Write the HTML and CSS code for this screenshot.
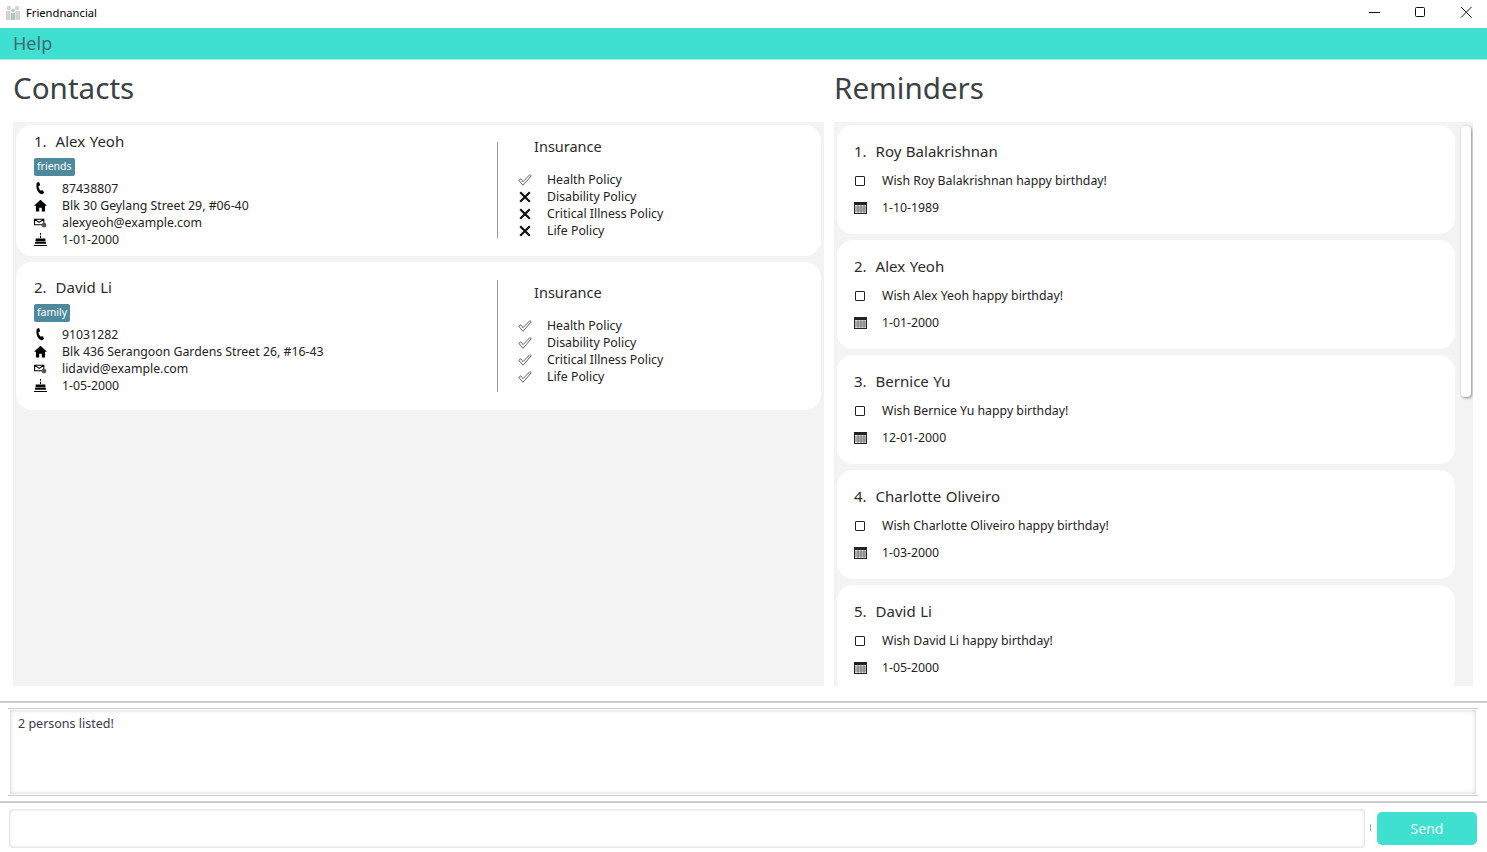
FILE: index.html
```html
<!DOCTYPE html>
<html>
<head>
  <meta charset="utf-8" />
  <title>Friendnancial</title>
  <link rel="stylesheet" href="styles.css">
</head>
<body>
  <svg class="defs" width="0" height="0">
    <symbol id="i-phone" viewBox="0 0 12 12"><path d="M2.600.6 4.700 0l1 3-1.500 1c.1 1.500.8 3 2 4l1.500-.7 1.800 2.500-1.700 1.400C4.500 11.500 1 6.500 2.600.6Z"/></symbol>
    <symbol id="i-home" viewBox="0 0 12 12"><path d="M6 .8 0 6.200h1.800V11.500h3V8h2.400v3.500h3V6.200H12Z"/></symbol>
    <symbol id="i-mail" viewBox="0 0 14 12"><path d="M.6 2.500h10v6H.6ZM.6 2.500l5 3.500 5-3.500" fill="none" stroke="#000" stroke-width="1.100"/><circle cx="10.800" cy="8.800" r="2.600" fill="#555"/></symbol>
    <symbol id="i-cake" viewBox="0 0 12 12"><path d="M5.500 0h1v1.500h-1ZM5.500 2.500h1v2h-1ZM1.500 5h9v2.500h-9ZM1 8h10v2H1ZM0 11h12v1H0Z"/></symbol>
    <symbol id="i-check" viewBox="0 0 14 12"><path d="M.8 6.300 2.800 4.800l2.200 2.900L11.800.6 13.300 1.800 5 11.300Z" fill="none" stroke="#555" stroke-width=".9"/></symbol>
    <symbol id="i-cross" viewBox="0 0 12 12"><path d="M1.200 1.200l9.600 9.600M10.800 1.200l-9.600 9.600" fill="none" stroke="#111" stroke-width="2.200"/></symbol>
    <symbol id="i-box" viewBox="0 0 10 10"><rect x=".5" y=".5" width="9" height="9" rx=".5" fill="none" stroke="#222"/></symbol>
    <symbol id="i-cal" viewBox="0 0 13 12"><path d="M0 0h13v12H0Z" fill="#222"/><path d="M1 3h11v8H1Z" fill="#ddd"/><path d="M1 5h11M1 7h11M1 9h11M4 3v8M7 3v8M10 3v8" stroke="#444" stroke-width=".6"/></symbol>
  </svg>

  <div class="titlebar">
    <svg class="app-icon" width="16" height="16" viewBox="0 0 16 16"><g fill="#d0d3d2"><circle cx="4" cy="3" r="2.200"/><circle cx="12" cy="3" r="2.200"/><path d="M1 6h4.500v9H1ZM10.500 6H15v9h-4.500Z"/></g><circle cx="8" cy="5.500" r="1.800" fill="#b5c6c0"/><path d="M5.800 8h4.400v7H5.800Z" fill="#b5c6c0"/></svg>
    <span class="app-name">Friendnancial</span>
    <div class="win-btns">
      <svg width="46" height="24" viewBox="0 0 46 24"><path d="M18 12.500h11" stroke="#111"/></svg>
      <svg width="46" height="24" viewBox="0 0 46 24"><rect x="18.500" y="7.500" width="9" height="9" rx="1" fill="none" stroke="#111"/></svg>
      <svg width="46" height="24" viewBox="0 0 46 24"><path d="M18 7l10.500 10.500M28.500 7 18 17.500" fill="none" stroke="#111"/></svg>
    </div>
  </div>

  <div class="menubar">Help</div>

  <div class="columns">
    <section class="col col-left">
      <h1>Contacts</h1>
      <div class="list">
        <article class="card contact">
          <div class="info">
            <div class="name">1.&nbsp; Alex Yeoh</div>
            <span class="tag">friends</span>
            <div class="row"><svg class="ic"><use href="#i-phone"/></svg>87438807</div>
            <div class="row"><svg class="ic"><use href="#i-home"/></svg>Blk 30 Geylang Street 29, #06-40</div>
            <div class="row"><svg class="ic"><use href="#i-mail"/></svg>alexyeoh@example.com</div>
            <div class="row"><svg class="ic"><use href="#i-cake"/></svg>1-01-2000</div>
          </div>
          <div class="insurance">
            <div class="ins-title">Insurance</div>
            <div class="row"><svg class="ic-p"><use href="#i-check"/></svg>Health Policy</div>
            <div class="row"><svg class="ic-p"><use href="#i-cross"/></svg>Disability Policy</div>
            <div class="row"><svg class="ic-p"><use href="#i-cross"/></svg>Critical Illness Policy</div>
            <div class="row"><svg class="ic-p"><use href="#i-cross"/></svg>Life Policy</div>
          </div>
        </article>
        <article class="card contact contact-tall">
          <div class="info">
            <div class="name">2.&nbsp; David Li</div>
            <span class="tag">family</span>
            <div class="row"><svg class="ic"><use href="#i-phone"/></svg>91031282</div>
            <div class="row"><svg class="ic"><use href="#i-home"/></svg>Blk 436 Serangoon Gardens Street 26, #16-43</div>
            <div class="row"><svg class="ic"><use href="#i-mail"/></svg>lidavid@example.com</div>
            <div class="row"><svg class="ic"><use href="#i-cake"/></svg>1-05-2000</div>
          </div>
          <div class="insurance">
            <div class="ins-title">Insurance</div>
            <div class="row"><svg class="ic-p"><use href="#i-check"/></svg>Health Policy</div>
            <div class="row"><svg class="ic-p"><use href="#i-check"/></svg>Disability Policy</div>
            <div class="row"><svg class="ic-p"><use href="#i-check"/></svg>Critical Illness Policy</div>
            <div class="row"><svg class="ic-p"><use href="#i-check"/></svg>Life Policy</div>
          </div>
        </article>
      </div>
    </section>

    <section class="col col-right">
      <h1>Reminders</h1>
      <div class="list list-scroll">
        <div class="thumb"></div>
        <article class="card reminder">
          <div class="name">1.&nbsp; Roy Balakrishnan</div>
          <div class="rem-row"><svg class="ic-b"><use href="#i-box"/></svg>Wish Roy Balakrishnan happy birthday!</div>
          <div class="rem-row"><svg class="ic-c"><use href="#i-cal"/></svg>1-10-1989</div>
        </article>
        <article class="card reminder">
          <div class="name">2.&nbsp; Alex Yeoh</div>
          <div class="rem-row"><svg class="ic-b"><use href="#i-box"/></svg>Wish Alex Yeoh happy birthday!</div>
          <div class="rem-row"><svg class="ic-c"><use href="#i-cal"/></svg>1-01-2000</div>
        </article>
        <article class="card reminder">
          <div class="name">3.&nbsp; Bernice Yu</div>
          <div class="rem-row"><svg class="ic-b"><use href="#i-box"/></svg>Wish Bernice Yu happy birthday!</div>
          <div class="rem-row"><svg class="ic-c"><use href="#i-cal"/></svg>12-01-2000</div>
        </article>
        <article class="card reminder">
          <div class="name">4.&nbsp; Charlotte Oliveiro</div>
          <div class="rem-row"><svg class="ic-b"><use href="#i-box"/></svg>Wish Charlotte Oliveiro happy birthday!</div>
          <div class="rem-row"><svg class="ic-c"><use href="#i-cal"/></svg>1-03-2000</div>
        </article>
        <article class="card reminder">
          <div class="name">5.&nbsp; David Li</div>
          <div class="rem-row"><svg class="ic-b"><use href="#i-box"/></svg>Wish David Li happy birthday!</div>
          <div class="rem-row"><svg class="ic-c"><use href="#i-cal"/></svg>1-05-2000</div>
        </article>
      </div>
    </section>
  </div>

  <div class="result-wrap">
    <div class="result">
      <div class="result-text">2 persons listed!</div>
    </div>
  </div>

  <div class="command">
    <div class="command-input"></div>
    <span class="caret"></span>
    <button class="send">Send</button>
  </div>
</body>
</html>
```

FILE: styles.css
```css
html, body {
  margin: 0;
  height: 852px;
  overflow: hidden;
}

body {
  font-family: "Noto Sans", "Open Sans", sans-serif;
  color: #2b2b2b;
  background: #fff;
  display: flex;
  flex-direction: column;
}

.defs {
  display: none;
}

.titlebar {
  height: 28px;
  flex: none;
  display: flex;
  align-items: center;
  padding: 0 0 3px 5px;
  box-sizing: border-box;
  font-size: 11.200px;
  color: #000;
}

.app-icon {
  margin-right: 5px;
}

.win-btns {
  margin-left: auto;
  margin-right: -2px;
  display: flex;
  padding-bottom: 1px;
}

.menubar {
  height: 32px;
  flex: none;
  box-sizing: border-box;
  background: #40e0d0;
  border-bottom: 1px solid #a8ece4;
  padding-left: 13px;
  font-size: 18px;
  line-height: 31px;
  color: #3f6b70;
}

.columns {
  height: 626px;
  flex: none;
  display: flex;
  padding: 0 14px 0 13px;
  gap: 10px;
}

.col {
  display: flex;
  flex-direction: column;
}

.col-left {
  width: 811px;
}

.col-right {
  flex: 1;
  min-width: 0;
}

h1 {
  margin: 0;
  height: 62px;
  font-size: 29.600px;
  font-weight: 400;
  line-height: 56px;
  color: #3b4245;
  flex: none;
}

.list {
  flex: 1;
  background: #f3f3f3;
  padding: 3px;
  display: flex;
  flex-direction: column;
  gap: 6px;
  overflow: hidden;
  position: relative;
}

.list-scroll {
  padding-right: 18px;
}

.thumb {
  position: absolute;
  top: 4px;
  right: 2px;
  width: 10px;
  height: 271px;
  background: #fff;
  border-radius: 4px;
  box-shadow: 1px 1px 3px #888;
}

.card {
  background: #fff;
  border-radius: 16px;
  flex: none;
}

.contact {
  display: flex;
  padding: 7px 0 8px 18px;
}

.contact-tall {
  padding: 16px 0 16px 18px;
}

.info {
  width: 463px;
  flex: none;
}

.name {
  font-size: 15px;
  word-spacing: .6px;
  line-height: 18px;
  padding-bottom: 2px;
  color: #2b2b2b;
}

.tag {
  display: inline-block;
  margin: 6px 0 4px;
  padding: 0 3px;
  height: 18px;
  line-height: 17px;
  font-size: 10.500px;
  color: #fff;
  background: #4f8a9c;
  border-radius: 2px;
  vertical-align: top;
}

.row {
  display: flex;
  align-items: center;
  height: 17px;
  font-size: 12.300px;
  color: #222;
}

.ic {
  width: 13px;
  height: 13px;
  margin-right: 15px;
}

.insurance {
  display: flow-root;
  margin-top: 10px;
  height: 96px;
  border-left: 1px solid #9a9a9a;
  padding-left: 21px;
  flex: 1;
}

.contact-tall .insurance {
  margin-top: 2px;
  height: 112px;
}

.ins-title {
  margin: -6px 0 15px 15px;
  font-size: 14.500px;
  line-height: 20px;
  color: #2b2b2b;
}

.contact-tall .ins-title {
  margin-top: 2px;
}

.ic-p {
  width: 14px;
  height: 12px;
  margin: 0 15px 0 -1px;
}

.reminder {
  height: 109px;
  padding: 17px 17px 0;
  box-sizing: border-box;
}

.reminder .name {
  padding-bottom: 3px;
}

.rem-row {
  display: flex;
  align-items: center;
  height: 19px;
  margin-top: 8px;
  font-size: 12.300px;
  color: #222;
}

.ic-b {
  width: 10px;
  height: 10px;
  margin: 0 17px 0 1px;
}

.ic-c {
  width: 13px;
  height: 12px;
  margin-right: 15px;
}

.result-wrap {
  height: 102px;
  flex: none;
  margin-top: 15px;
  border-top: 2px solid #ccc;
  border-bottom: 2px solid #ccc;
  box-sizing: border-box;
  padding: 5px 9px 5px 8px;
  display: flex;
}

.result {
  flex: 1;
  display: flex;
  border-top: 1px solid #ccc;
  border-bottom: 1px solid #ccc;
  padding: 1px 2px 1px;
}

.result-text {
  flex: 1;
  padding: 5px 8px;
  font-size: 12.500px;
  line-height: 17px;
  color: #3a3a4a;
  box-shadow: inset 0 0 4px #c4c4c4;
}

.command {
  flex: 1;
  display: flex;
  align-items: flex-start;
  padding: 6px 10px 0 9px;
}

.command-input {
  width: 1355px;
  height: 37px;
  border: 1px solid #e8e8e8;
  border-radius: 3px;
  box-shadow: inset 0 0 3px #ddd;
}

.caret {
  width: 1px;
  height: 7px;
  margin: 15px 6px 0 5px;
  background: #aaa;
}

.send {
  width: 100px;
  height: 33px;
  margin-top: 3px;
  border: none;
  border-radius: 5px;
  background: #40e0d0;
  color: #eafffb;
  font-family: inherit;
  font-size: 14px;
}
```
